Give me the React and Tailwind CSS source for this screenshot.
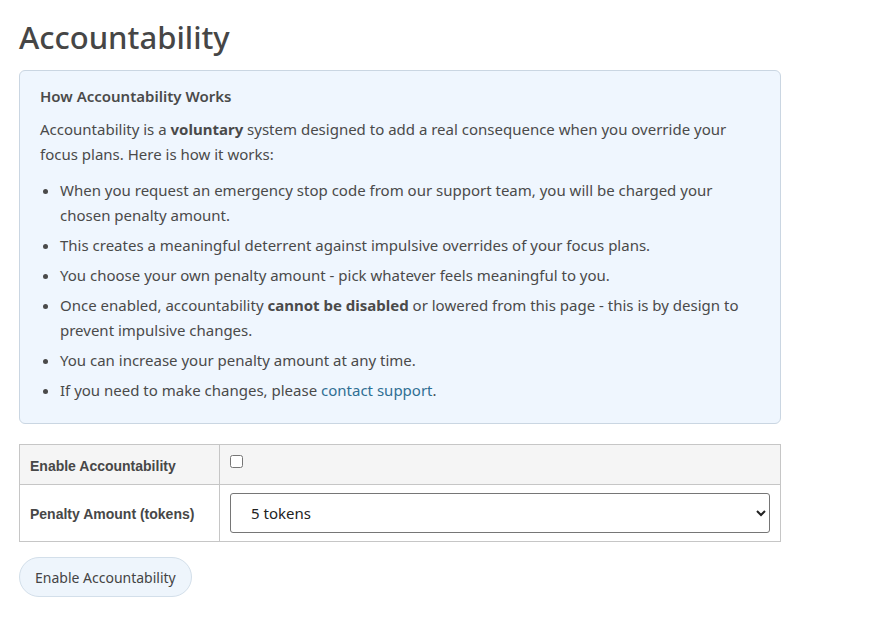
import { useState } from 'react';

const bullets = [
  <>When you request an emergency stop code from our support team, you will be charged your chosen penalty amount.</>,
  <>This creates a meaningful deterrent against impulsive overrides of your focus plans.</>,
  <>You choose your own penalty amount - pick whatever feels meaningful to you.</>,
  <>
    Once enabled, accountability <strong className="font-bold">cannot be disabled</strong> or lowered from this page - this is by design to prevent impulsive changes.
  </>,
  <>You can increase your penalty amount at any time.</>,
  <>
    If you need to make changes, please{' '}
    <a href="#" className="text-[#2f6f94] no-underline">contact support</a>.
  </>,
];

export default function App() {
  const [enabled, setEnabled] = useState(false);
  const [amount, setAmount] = useState('5');

  return (
    <div className="min-h-screen bg-white px-[19px] pt-[14px] text-[#4a4a4a] font-['Noto_Sans','Open_Sans',sans-serif]">
      <h1 className="text-[31px] font-medium leading-[46px] text-[#464646]">Accountability</h1>

      <div className="mt-[10px] w-[762px] rounded-md border border-[#cad6e2] bg-[#eff6fe] px-5 pt-[14px] pb-[20px]">
        <h2 className="text-[15px] font-semibold leading-[22px] text-[#4a4a4a]">How Accountability Works</h2>
        <p className="mt-[10px] text-[15px] leading-[25px]">
          Accountability is a <strong className="font-bold">voluntary</strong> system designed to add a real consequence when you override your focus plans. Here is how it works:
        </p>
        <ul className="mt-[11px] list-disc pl-5 text-[15px] leading-[25px] space-y-[5px]">
          {bullets.map((b, i) => (
            <li key={i}>{b}</li>
          ))}
        </ul>
      </div>

      <table className="mt-[20px] w-[762px] border-collapse text-[14px]">
        <tbody>
          <tr className="bg-[#f5f5f5]">
            <th className="h-[40px] w-[200px] border border-[#c6c6c6] px-[10px] pt-[3px] text-left font-bold text-[#474747] font-['Liberation_Sans',Arial,sans-serif]">
              Enable Accountability
            </th>
            <td className="border border-[#c6c6c6] px-[10px] align-top pt-[10px]">
              <input
                type="checkbox"
                checked={enabled}
                onChange={(e) => setEnabled(e.target.checked)}
                className="m-0 block h-[13px] w-[13px]"
              />
            </td>
          </tr>
          <tr className="bg-white">
            <th className="h-[57px] border border-[#c6c6c6] px-[10px] pt-[2px] text-left font-bold text-[#474747] font-['Liberation_Sans',Arial,sans-serif]">
              Penalty Amount (tokens)
            </th>
            <td className="border border-[#c6c6c6] px-[10px]">
              <select
                value={amount}
                onChange={(e) => setAmount(e.target.value)}
                className="h-[40px] w-full rounded-[3px] border border-[#767676] bg-white px-[16px] text-[15px] text-[#222]"
              >
                <option value="5">5 tokens</option>
                <option value="10">10 tokens</option>
                <option value="25">25 tokens</option>
                <option value="50">50 tokens</option>
                <option value="100">100 tokens</option>
              </select>
            </td>
          </tr>
        </tbody>
      </table>

      <button className="mt-[15px] h-[40px] rounded-full border border-[#d3dfea] bg-[#eef5fc] px-[15px] text-[14px] text-[#444]">
        Enable Accountability
      </button>
    </div>
  );
}
